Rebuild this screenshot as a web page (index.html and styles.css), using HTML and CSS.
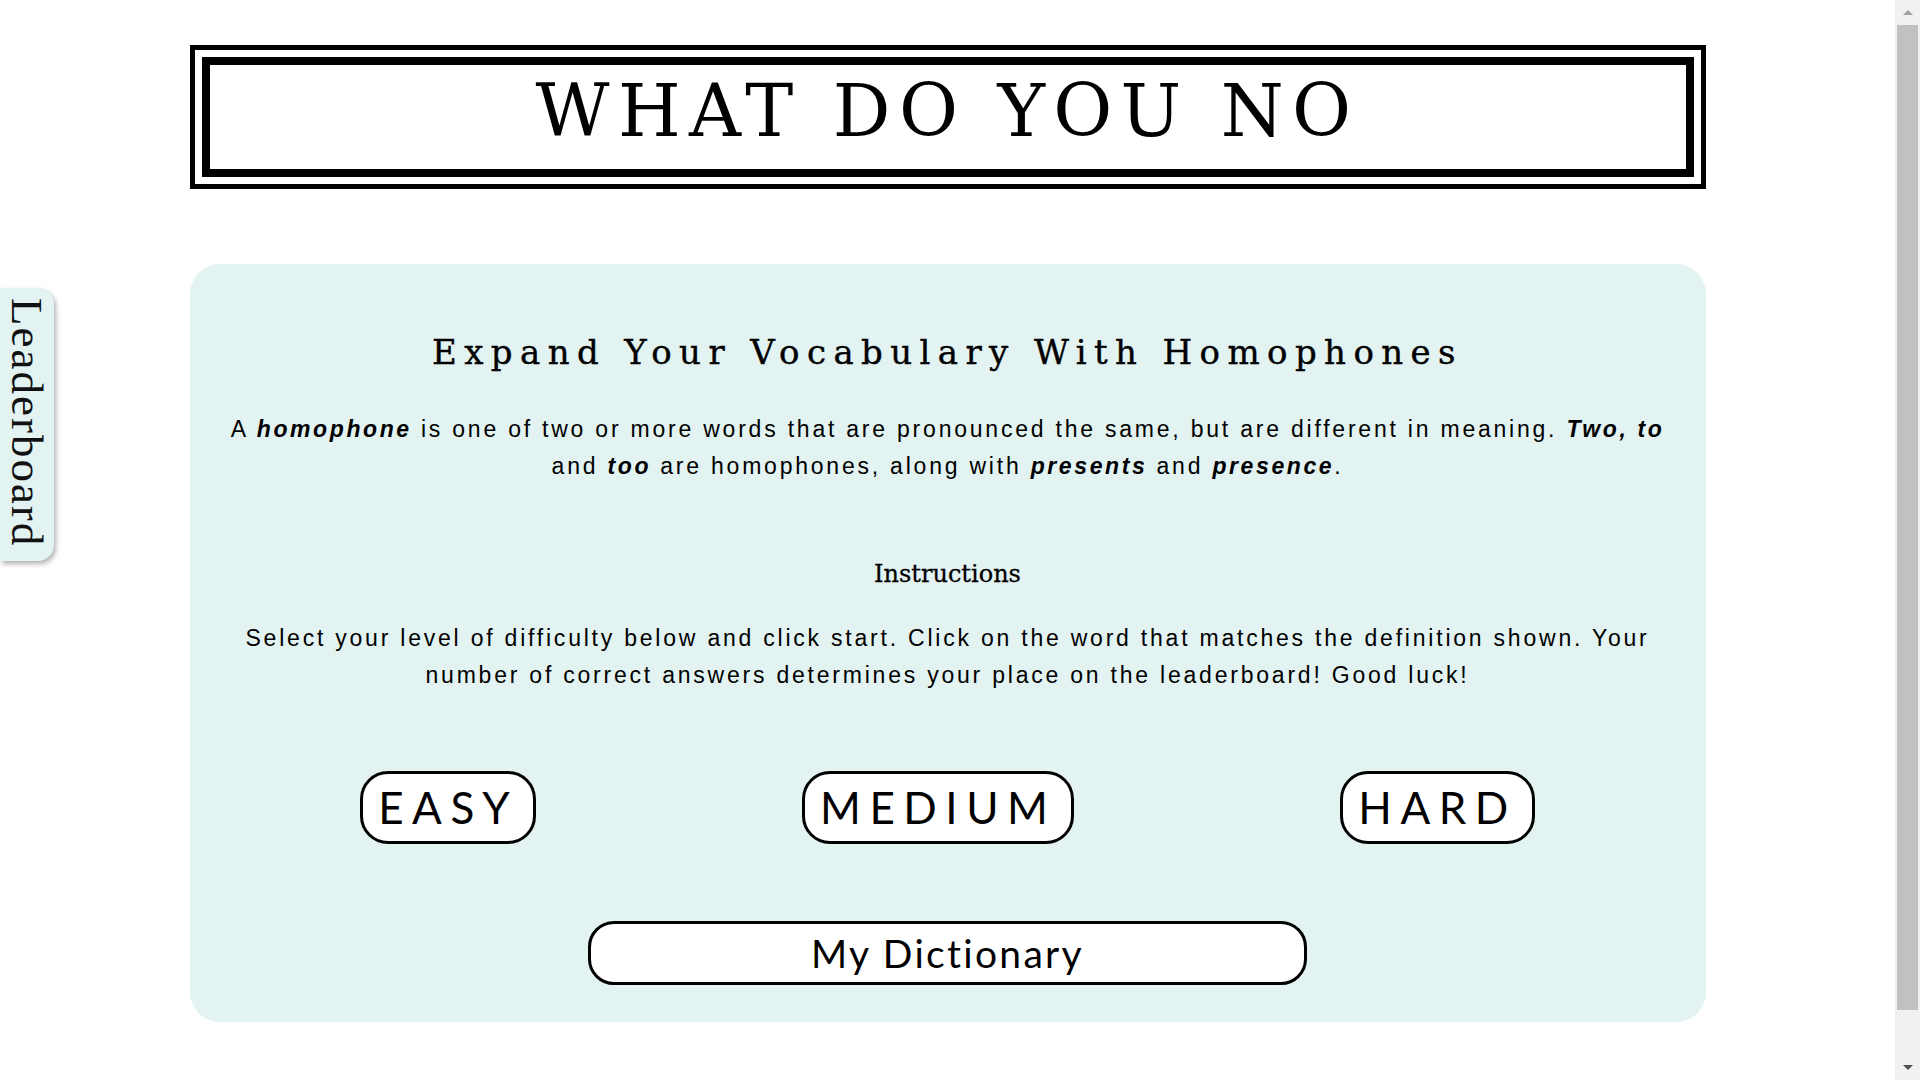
FILE: index.html
```html
<!DOCTYPE html>
<html lang="en">
<head>
<meta charset="utf-8">
<title>What Do You No</title>
<link rel="stylesheet" href="styles.css">
</head>
<body>
<aside class="leaderboard-tab">Leaderboard</aside>
<div class="page">
  <header class="title-frame">
    <div class="title-inner">
      <h1 class="title">WHAT DO YOU NO</h1>
    </div>
  </header>
  <main class="panel">
    <h2 class="panel-title">Expand Your Vocabulary With Homophones</h2>
    <p class="lead">A <em>homophone</em> is one of two or more words that are pronounced the same, but are different in meaning. <em>Two, to</em> and <em>too</em> are homophones, along with <em>presents</em> and <em>presence</em>.</p>
    <h3 class="sub-title">Instructions</h3>
    <p class="lead lead-instr">Select your level of difficulty below and click start. Click on the word that matches the definition shown. Your number of correct answers determines your place on the leaderboard! Good luck!</p>
    <div class="levels">
      <button class="level">EASY</button>
      <button class="level">MEDIUM</button>
      <button class="level">HARD</button>
    </div>
    <button class="dict">My Dictionary</button>
  </main>
</div>
<div class="scrollbar" aria-hidden="true">
  <span class="sb-btn"><span class="sb-arrow sb-up"></span></span>
  <span class="sb-track"><span class="sb-thumb"></span></span>
  <span class="sb-btn"><span class="sb-arrow sb-down"></span></span>
</div>
</body>
</html>
```
FILE: styles.css
```css
html {
  background: #fff;
  scrollbar-width: none;
}
html::-webkit-scrollbar {
  display: none;
}
body {
  margin: 0 25px 0 0;
  font-family: "Liberation Sans", Arial, sans-serif;
  color: #000;
}
.page {
  width: 80%;
  margin: 45px auto 0;
  padding-bottom: 109px;
}
.title-frame {
  border: 5px solid #000;
  padding: 7px;
}
.title-inner {
  border: 8px solid #000;
  box-sizing: border-box;
  height: 120px;
  display: flex;
  align-items: center;
  justify-content: center;
  padding-bottom: 12px;
}
.title {
  margin: 0;
  font-family: "DejaVu Serif", serif;
  font-weight: normal;
  font-size: 72px;
  line-height: 1;
  letter-spacing: 8.3px;
}
.panel {
  margin-top: 75px;
  background: #e2f3f2;
  border-radius: 30px;
  padding: 68px 30px 37px;
  text-align: center;
}
.panel-title {
  margin: 0;
  font-family: "DejaVu Serif", serif;
  font-weight: normal;
  font-size: 34px;
  line-height: 40px;
  letter-spacing: 7.4px;
  -webkit-text-stroke: 0.4px #000;
}
.lead {
  margin: 39px 0 0;
  font-size: 23px;
  line-height: 37px;
  letter-spacing: 2.78px;
}
.lead em {
  font-weight: bold;
  font-style: italic;
  letter-spacing: 2.6px;
}
.sub-title {
  margin: 74px 0 0;
  font-family: "DejaVu Serif", serif;
  font-weight: normal;
  font-size: 24px;
  line-height: 30px;
  -webkit-text-stroke: 0.3px #000;
}
.lead-instr {
  margin-top: 31px;
}
.levels {
  margin-top: 77px;
  display: flex;
  justify-content: center;
  gap: 266px;
}
.level {
  height: 73px;
  padding: 0 15px;
  border: 3px solid #000;
  border-radius: 28px;
  background: #fff;
  color: #000;
  font-family: Lato, "Open Sans", sans-serif;
  font-size: 44px;
  line-height: 67px;
  letter-spacing: 8.5px;
}
.dict {
  display: block;
  margin: 77px auto 0;
  width: 719px;
  height: 64px;
  border: 3px solid #000;
  border-radius: 26px;
  background: #fff;
  color: #000;
  font-family: Lato, "Open Sans", sans-serif;
  font-size: 39px;
  line-height: 58px;
  letter-spacing: 2.3px;
  padding: 0;
}
.leaderboard-tab {
  position: absolute;
  left: 0;
  top: 288px;
  width: 54px;
  height: 273px;
  box-sizing: border-box;
  padding-top: 10px;
  writing-mode: vertical-rl;
  background: #e2f3f2;
  border-radius: 0 16px 16px 0;
  box-shadow: 2px 3px 5px rgba(0, 0, 0, 0.3);
  font-family: "Liberation Serif", serif;
  font-size: 45px;
  line-height: 54px;
  letter-spacing: 2px;
  color: #111;
}
.scrollbar {
  position: fixed;
  top: 0;
  right: 0;
  width: 25px;
  height: 100vh;
  background: #f1f1f1;
  display: flex;
  flex-direction: column;
}
.sb-btn {
  height: 25px;
  flex: none;
  display: flex;
  align-items: center;
  justify-content: center;
}
.sb-track {
  flex: 1;
  display: flex;
  flex-direction: column;
}
.sb-thumb {
  height: 985px;
  margin: 0 2px;
  background: #c1c1c1;
}
.sb-arrow {
  width: 0;
  height: 0;
  border-left: 5px solid transparent;
  border-right: 5px solid transparent;
}
.sb-up {
  border-bottom: 5px solid #a3a3a3;
}
.sb-down {
  border-top: 5px solid #505050;
}
```
